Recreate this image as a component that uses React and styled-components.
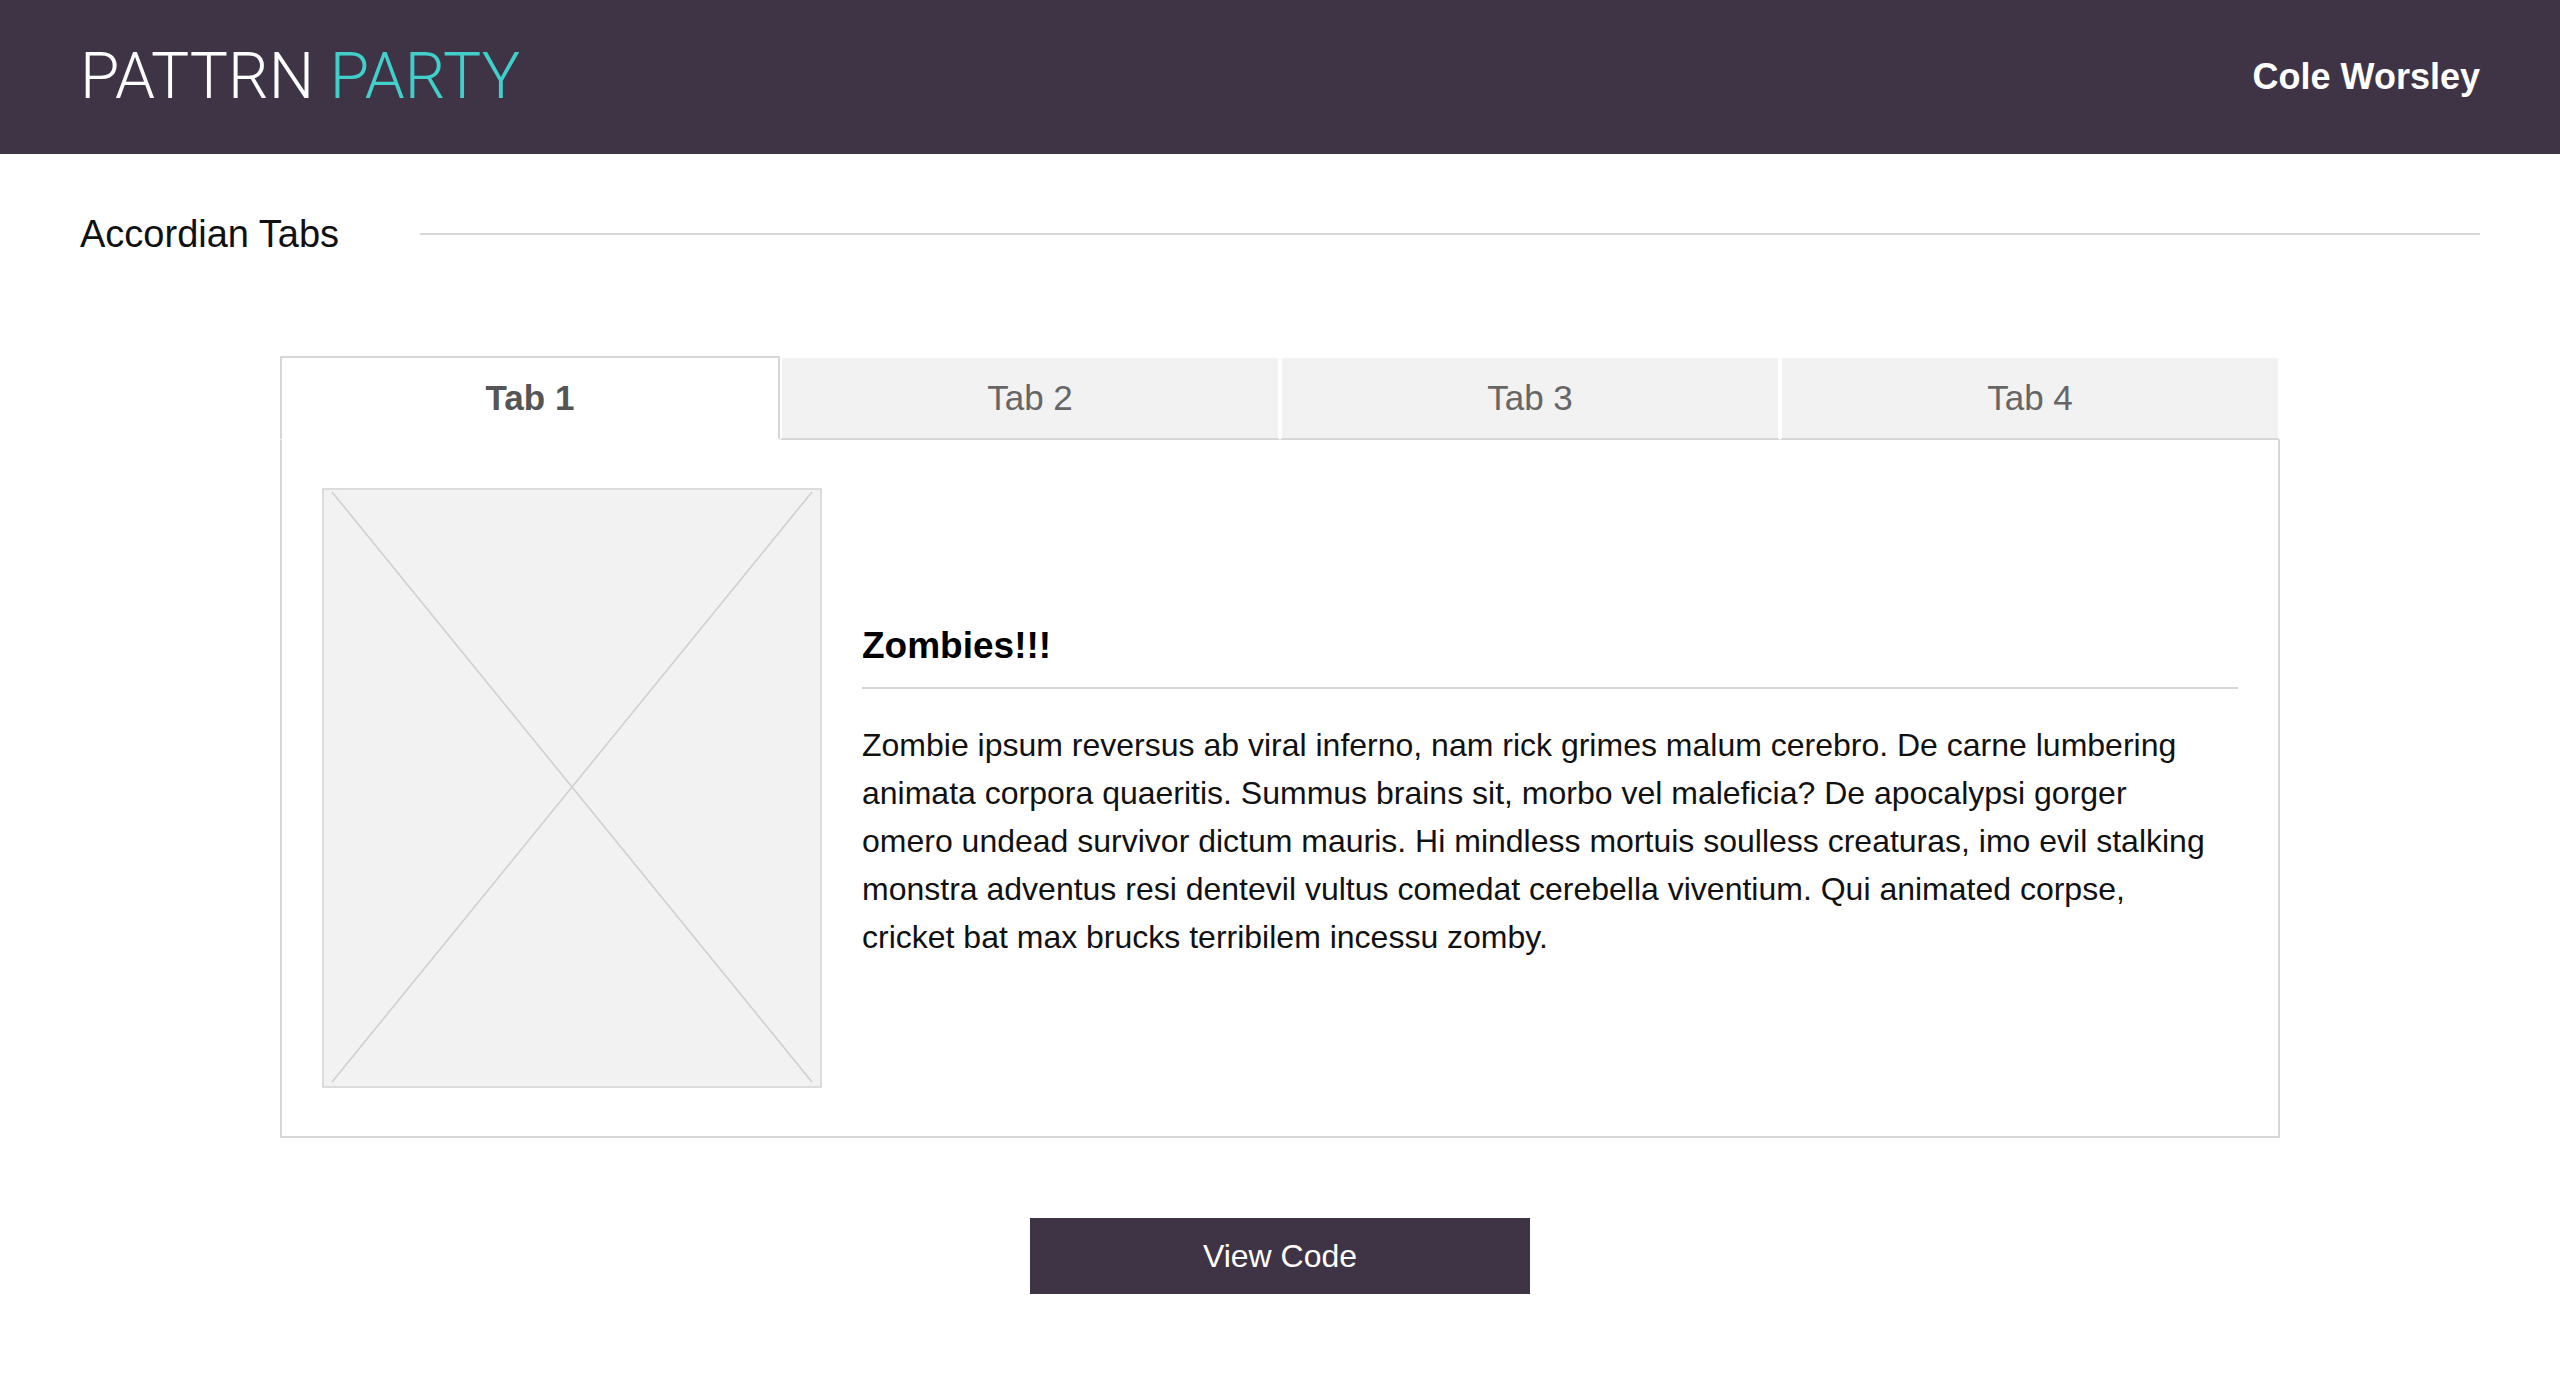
import React, { useState } from "react";
import styled, { createGlobalStyle } from "styled-components";

const GlobalStyle = createGlobalStyle`
  html, body {
    margin: 0;
    padding: 0;
    background: #ffffff;
  }
  body {
    font-family: "Liberation Sans", Arial, Helvetica, sans-serif;
    color: #111111;
  }
  * { box-sizing: border-box; }
`;

const Header = styled.header`
  height: 154px;
  background: #3f3445;
  display: flex;
  align-items: center;
  justify-content: space-between;
  padding: 0 80px;
`;

const Logo = styled.div`
  font-family: Roboto, "Liberation Sans", sans-serif;
  font-weight: 300;
  font-size: 64px;
  line-height: 1;
  color: #ffffff;
`;

const Accent = styled.span`
  color: #40cfcb;
`;

const UserName = styled.div`
  font-weight: 700;
  font-size: 36px;
  color: #ffffff;
`;

const Main = styled.main`
  padding: 0 80px;
`;

const SectionHeader = styled.div`
  display: flex;
  align-items: center;
  gap: 81px;
  margin-top: 58px;
`;

const SectionTitle = styled.h1`
  margin: 0;
  font-weight: 400;
  font-size: 38px;
  line-height: 44px;
  color: #111111;
`;

const Rule = styled.div`
  flex: 1;
  height: 2px;
  background: #d6d6d6;
`;

const TabsWrap = styled.section`
  width: 2000px;
  margin: 100px auto 0;
`;

const TabList = styled.div`
  display: grid;
  grid-template-columns: repeat(4, 1fr);
`;

const Tab = styled.button`
  height: 84px;
  margin: 0;
  font-family: "Liberation Sans", Arial, sans-serif;
  font-size: 35px;
  cursor: pointer;
  color: ${(p) => (p.$active ? "#555555" : "#666666")};
  font-weight: ${(p) => (p.$active ? 700 : 400)};
  background: ${(p) => (p.$active ? "#ffffff" : "#f2f2f2")};
  border: 2px solid ${(p) => (p.$active ? "#d6d6d6" : "#ffffff")};
  border-bottom: 2px solid ${(p) => (p.$active ? "#ffffff" : "#d6d6d6")};
  display: flex;
  align-items: center;
  justify-content: center;
`;

const Panel = styled.div`
  border: 2px solid #d6d6d6;
  border-top: none;
  padding: 48px 40px;
  display: flex;
  align-items: center;
  gap: 40px;
`;

const Placeholder = styled.div`
  flex-shrink: 0;
  width: 500px;
  height: 600px;
  border: 2px solid #dcdcdc;
  background: #f2f2f2;
  display: flex;
`;

const PlaceholderArt = styled.svg`
  width: 100%;
  height: 100%;
  display: block;
`;

const Content = styled.div`
  flex: 1;
  min-width: 0;
  padding-top: 10px;
`;

const Heading = styled.h2`
  margin: 0;
  font-size: 37px;
  font-weight: 700;
  color: #000000;
  padding-bottom: 20px;
  border-bottom: 2px solid #d6d6d6;
`;

const Paragraph = styled.p`
  margin: 32px 0 0;
  padding-right: 18px;
  font-size: 32px;
  line-height: 48px;
  color: #111111;
`;

const ViewCodeButton = styled.button`
  display: block;
  width: 500px;
  height: 76px;
  margin: 80px auto 0;
  background: #3f3445;
  color: #ffffff;
  border: none;
  font-family: "Liberation Sans", Arial, sans-serif;
  font-size: 32px;
  cursor: pointer;
`;

const tabs = ["Tab 1", "Tab 2", "Tab 3", "Tab 4"];

export default function App() {
  const [active, setActive] = useState(0);
  return (
    <>
      <GlobalStyle />
      <Header>
        <Logo>
          PATTRN <Accent>PARTY</Accent>
        </Logo>
        <UserName>Cole Worsley</UserName>
      </Header>
      <Main>
        <SectionHeader>
          <SectionTitle>Accordian Tabs</SectionTitle>
          <Rule />
        </SectionHeader>
        <TabsWrap>
          <TabList>
            {tabs.map((t, i) => (
              <Tab key={t} $active={i === active} onClick={() => setActive(i)}>
                {t}
              </Tab>
            ))}
          </TabList>
          <Panel>
            <Placeholder>
              <PlaceholderArt viewBox="0 0 496 596" preserveAspectRatio="none">
                <line x1="8" y1="2" x2="488" y2="592" stroke="#d0d0d0" strokeWidth="1.6" />
                <line x1="488" y1="2" x2="8" y2="592" stroke="#d0d0d0" strokeWidth="1.6" />
              </PlaceholderArt>
            </Placeholder>
            <Content>
              <Heading>Zombies!!!</Heading>
              <Paragraph>
                Zombie ipsum reversus ab viral inferno, nam rick grimes malum cerebro. De carne
                lumbering animata corpora quaeritis. Summus brains sit, morbo vel maleficia? De
                apocalypsi gorger omero undead survivor dictum mauris. Hi mindless mortuis soulless
                creaturas, imo evil stalking monstra adventus resi dentevil vultus comedat cerebella
                viventium. Qui animated corpse, cricket bat max brucks terribilem incessu zomby.
              </Paragraph>
            </Content>
          </Panel>
        </TabsWrap>
        <ViewCodeButton>View Code</ViewCodeButton>
      </Main>
    </>
  );
}
